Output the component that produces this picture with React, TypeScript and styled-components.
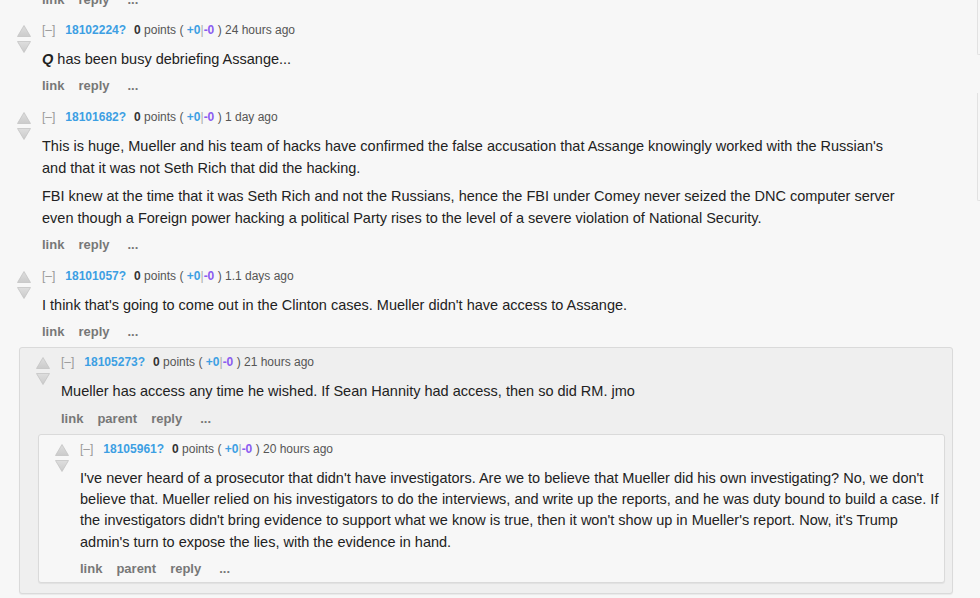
import React from "react";
import styled, { createGlobalStyle } from "styled-components";

const Global = createGlobalStyle`
  html, body { margin: 0; padding: 0; background: #f7f7f7; overflow: hidden; }
  body { font-family: "Liberation Sans", Arial, Helvetica, sans-serif; color: #222; }
`;

const Page = styled.div`
  display: flex;
  align-items: flex-start;
  width: 980px;
  height: 598px;
  overflow: hidden;
`;

const Main = styled.div`
  width: 961px;
  flex: none;
`;

const Sidebar = styled.div`
  margin-left: 16px;
  flex: 1;
  display: flex;
  flex-direction: column;
`;

const SideBox = styled.div<{ $top: number; $h: number }>`
  margin-top: ${(p) => p.$top}px;
  height: ${(p) => p.$h}px;
  border-left: 1px solid #e2e2e2;
  border-bottom: 1px solid #e2e2e2;
  border-radius: 0 0 0 2px;
`;

const CommentBox = styled.div<{ $nested: boolean; $bg: string }>`
  border: 1px solid ${(p) => (p.$nested ? "#dadada" : "transparent")};
  border-radius: 3px;
  background: ${(p) => (p.$nested ? p.$bg : "transparent")};
  box-shadow: ${(p) => (p.$nested ? "0 1px 1px rgba(0,0,0,0.06)" : "none")};
  padding: 6px 0 5px 0;
  margin-top: ${(p) => (p.$nested ? 0 : 2)}px;
`;

const Row = styled.div`
  display: flex;
  align-items: flex-start;
`;

const Midcol = styled.div`
  width: 14px;
  margin: 3px 11px 0 16px;
  display: flex;
  flex-direction: column;
  gap: 4px;
  flex: none;
`;

const Entry = styled.div`
  flex: 1;
  min-width: 0;
`;

const Tagline = styled.div`
  font-size: 12px;
  line-height: 16px;
  color: #555;
  white-space: nowrap;
`;

const Expand = styled.span`
  color: #999;
  margin-right: 10px;
`;

const Author = styled.span`
  color: #3d9fe3;
  font-weight: bold;
  margin-right: 8px;
`;

const Score = styled.span`
  color: #555;
  b { color: #333; }
`;

const Up = styled.b`
  color: #3d9fe3;
`;

const Down = styled.b`
  color: #8b5cf0;
`;

const Pipe = styled.span`
  color: #aaa;
`;

const Body = styled.div`
  margin: 11px 0 8px;
  max-width: 860px;
  font-size: 14.5px;
  line-height: 21.3px;
  color: #222;
  p { margin: 0; }
  p + p { margin-top: 7.6px; }
`;

const Actions = styled.div<{ $tail?: boolean }>`
  display: flex;
  font-size: 13px;
  line-height: 16px;
  font-weight: bold;
  color: #777;
  ${(p) => (p.$tail ? "margin: -8px 0 7px 42px; height: 16px;" : "")}
`;

const ActionLink = styled.span<{ $more?: boolean }>`
  margin-right: 14px;
  margin-left: ${(p) => (p.$more ? "4px" : "0")};
`;

const ChildList = styled.div`
  margin: 7px 7px 5px 18px;
`;

const Arrow = ({ down }: { down?: boolean }) => (
  <svg width="14" height="12" viewBox="0 0 14 12">
    <defs>
      <linearGradient id={down ? "gd" : "gu"} x1="0" y1="0" x2="0" y2="1">
        <stop offset="0" stopColor="#dedede" />
        <stop offset="1" stopColor="#cbcbcb" />
      </linearGradient>
    </defs>
    <polygon
      points={down ? "0.5,0.5 13.5,0.5 7,11.5" : "7,0.5 13.5,11.5 0.5,11.5"}
      fill={`url(#${down ? "gd" : "gu"})`}
      stroke="#c4c4c4"
      strokeWidth="0.8"
      strokeLinejoin="round"
    />
  </svg>
);

type C = {
  id: string;
  time: string;
  body: React.ReactNode[];
  parent?: boolean;
  children?: C[];
};

const data: C[] = [
  {
    id: "18102224?",
    time: "24 hours ago",
    body: [
      <>
        <b>
          <i>Q</i>
        </b>{" "}
        has been busy debriefing Assange...
      </>,
    ],
  },
  {
    id: "18101682?",
    time: "1 day ago",
    body: [
      "This is huge, Mueller and his team of hacks have confirmed the false accusation that Assange knowingly worked with the Russian's and that it was not Seth Rich that did the hacking.",
      "FBI knew at the time that it was Seth Rich and not the Russians, hence the FBI under Comey never seized the DNC computer server even though a Foreign power hacking a political Party rises to the level of a severe violation of National Security.",
    ],
  },
  {
    id: "18101057?",
    time: "1.1 days ago",
    body: [
      "I think that's going to come out in the Clinton cases. Mueller didn't have access to Assange.",
    ],
    children: [
      {
        id: "18105273?",
        time: "21 hours ago",
        parent: true,
        body: [
          "Mueller has access any time he wished. If Sean Hannity had access, then so did RM. jmo",
        ],
        children: [
          {
            id: "18105961?",
            time: "20 hours ago",
            parent: true,
            body: [
              "I've never heard of a prosecutor that didn't have investigators. Are we to believe that Mueller did his own investigating? No, we don't believe that. Mueller relied on his investigators to do the interviews, and write up the reports, and he was duty bound to build a case. If the investigators didn't bring evidence to support what we know is true, then it won't show up in Mueller's report. Now, it's Trump admin's turn to expose the lies, with the evidence in hand.",
            ],
          },
        ],
      },
    ],
  },
];

const Comment = ({ c, depth }: { c: C; depth: number }) => (
  <CommentBox $nested={depth > 0} $bg={depth % 2 === 1 ? "#efefef" : "#f7f7f7"}>
    <Row>
      <Midcol>
        <Arrow />
        <Arrow down />
      </Midcol>
      <Entry>
        <Tagline>
          <Expand>[–]</Expand>
          <Author>{c.id}</Author>
          <Score>
            <b>0</b> points
          </Score>{" "}
          ( <Up>+0</Up>
          <Pipe>|</Pipe>
          <Down>-0</Down> ) {c.time}
        </Tagline>
        <Body>
          {c.body.map((b, i) => (
            <p key={i}>{b}</p>
          ))}
        </Body>
        <Actions>
          <ActionLink>link</ActionLink>
          {c.parent && <ActionLink>parent</ActionLink>}
          <ActionLink>reply</ActionLink>
          <ActionLink $more>...</ActionLink>
        </Actions>
      </Entry>
    </Row>
    {c.children && (
      <ChildList>
        {c.children.map((k) => (
          <Comment key={k.id} c={k} depth={depth + 1} />
        ))}
      </ChildList>
    )}
  </CommentBox>
);

export default function App() {
  return (
    <>
      <Global />
      <Page>
        <Main>
          <Actions $tail>
            <ActionLink>link</ActionLink>
            <ActionLink>reply</ActionLink>
            <ActionLink $more>...</ActionLink>
          </Actions>
          {data.map((c) => (
            <Comment key={c.id} c={c} depth={0} />
          ))}
        </Main>
        <Sidebar>
          <SideBox $top={0} $h={54} />
          <SideBox $top={38} $h={107} />
        </Sidebar>
      </Page>
    </>
  );
}
